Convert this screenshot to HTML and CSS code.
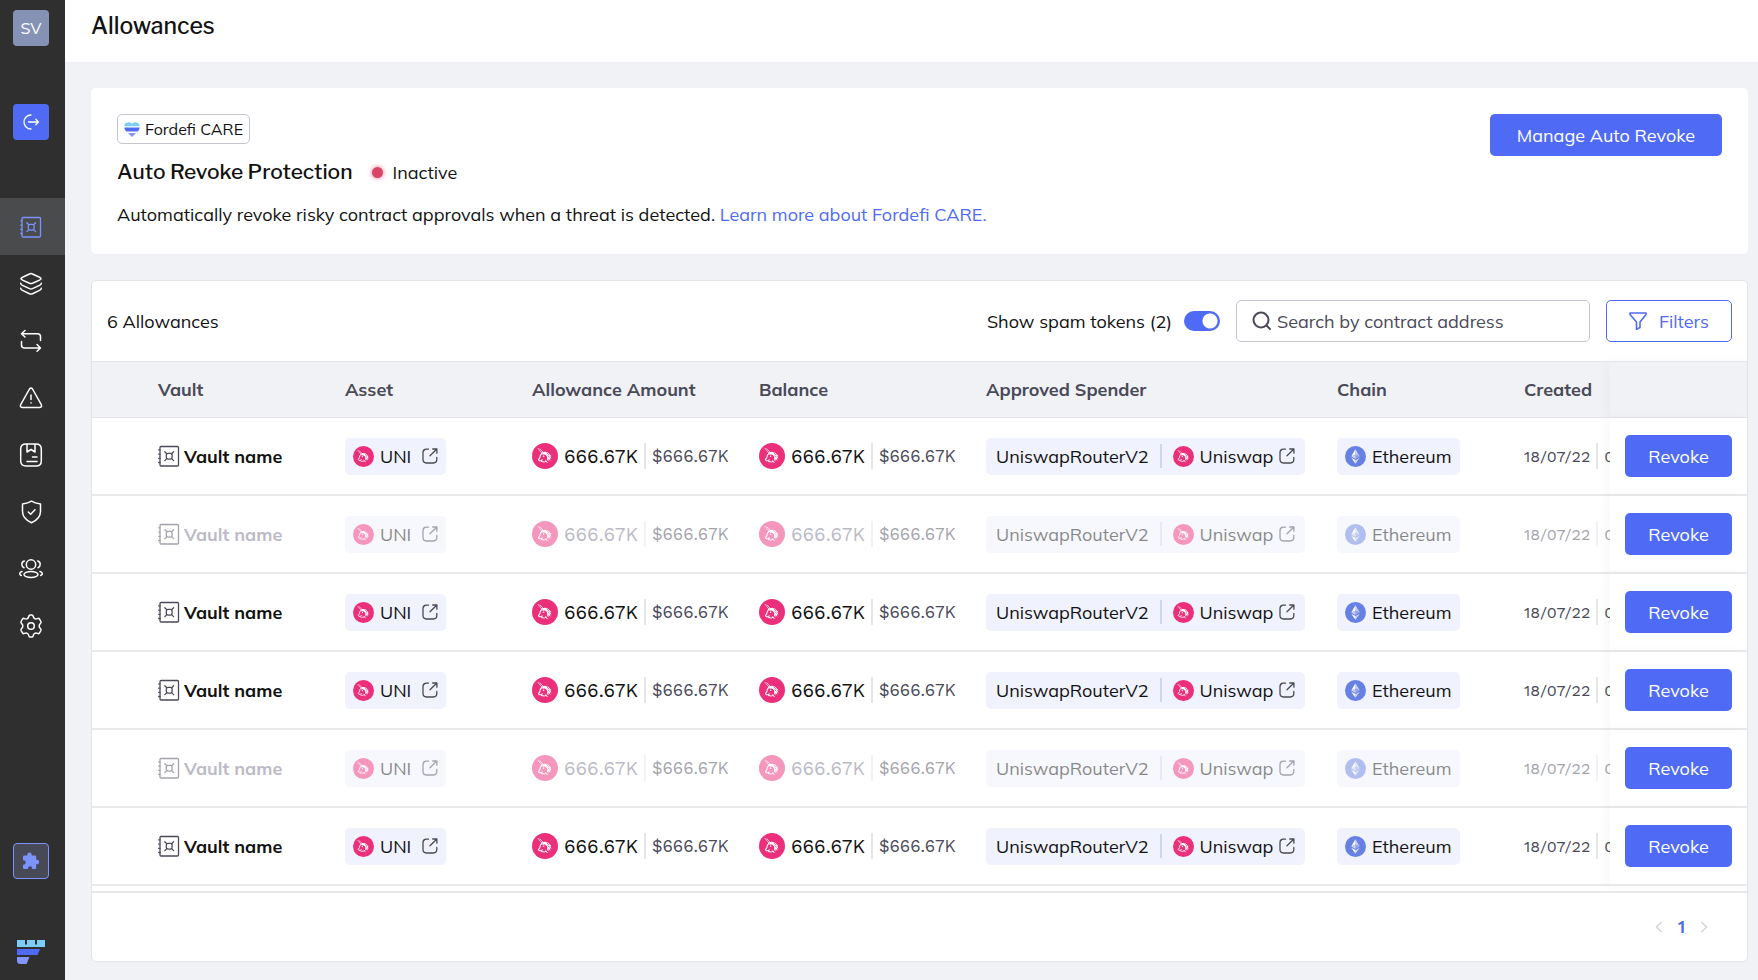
FILE: index.html
```html
<!DOCTYPE html>
<html lang="en">
<head>
<meta charset="utf-8">
<title>Allowances</title>
<link rel="stylesheet" href="styles.css">
</head>
<body>
<svg class="sprite" aria-hidden="true">
  <symbol id="i-vault" viewBox="0 0 22 22">
    <g fill="none" stroke="currentColor" stroke-width="1.3" stroke-linejoin="round" stroke-linecap="round">
      <rect x="2" y="1.500" width="18.500" height="19.500" rx="1"/>
      <path d="M.7 4.800H2M.7 9.100H2M.7 13.300H2M.7 17.500H2"/>
    </g>
    <g fill="none" stroke="currentColor" stroke-width="1.3" stroke-linecap="round">
      <rect x="8.300" y="8.300" width="5.800" height="5.800" rx="1.800"/>
      <path d="M6.800 6.800l2 2M15.600 6.800l-2 2M6.800 15.600l2-2M15.600 15.600l-2-2"/>
    </g>
  </symbol>
  <symbol id="i-link" viewBox="0 0 16 16">
    <path d="M6.500 1.200H4.400A3.400 3.400 0 0 0 1 4.600V11.600A3.400 3.400 0 0 0 4.400 15H11.400A3.400 3.400 0 0 0 14.800 11.600V9.500M8 7.700L14.600 1.200M10.700 1H14.900V5.200" fill="none" stroke="currentColor" stroke-width="1.300" stroke-linecap="round" stroke-linejoin="round"/>
  </symbol>
  <symbol id="i-uni" viewBox="0 0 26 26">
    <circle cx="13" cy="13" r="13" fill="#ec2f7b"/>
    <g fill="none" stroke="#fff" stroke-linecap="round" stroke-linejoin="round">
      <path d="M6 5.300L9.600 9.700M8 5.900L10.800 8.900" stroke-width=".7"/>
      <path d="M9.800 10.300L8.300 12.300 7.900 14.500 6.500 16.600 7.300 17.800 9 17.600 10.300 16.900" stroke-width="1.100"/>
      <path d="M9.500 18.600L12.300 19 14 18.200M13.800 17.800L15.200 19.700" stroke-width="1"/>
    </g>
    <path d="M10 9.200C13 8 16.300 8.700 17.600 11.300L19.600 13.300 18.300 13.100 19.500 16 17.900 14.800 18.400 18 16.700 15.800 16.300 18.600 15 16.200C16 14.300 14.700 12.300 12.700 11.500L10.500 11.700Z" fill="#fff"/>
    <path d="M14.600 9.700L17.300 12.300M15.600 12.500L17.600 14.300" stroke="#ec2f7b" stroke-width=".7"/>
    <circle cx="11.600" cy="13.200" r=".8" fill="#fff"/>
  </symbol>
  <symbol id="i-eth" viewBox="0 0 22 22">
    <circle cx="11" cy="11" r="11" fill="#6680e3"/>
    <path d="M11 3.500V8.900L15.500 11Z" fill="#c5d0f7"/>
    <path d="M11 3.500L6.500 11 11 8.900Z" fill="#fff"/>
    <path d="M11 8.900V13.700L15.500 11Z" fill="#91a4ec"/>
    <path d="M11 8.900V13.700L6.500 11Z" fill="#c5d0f7"/>
    <path d="M11 14.700V18.500L15.500 12.200Z" fill="#c5d0f7"/>
    <path d="M11 14.700V18.500L6.500 12.200Z" fill="#fff"/>
  </symbol>
</svg>

<div class="app">
  <nav class="sidebar" aria-label="Main">
    <button class="avatar" type="button">SV</button>
    <button class="tile tile-primary" type="button" aria-label="Connect">
      <svg width="18" height="18" viewBox="0 0 18 18" fill="none" stroke="#fff" stroke-width="1.300" stroke-linecap="round" stroke-linejoin="round"><path d="M9 2A7 7 0 1 0 9 16M6.500 9H16.500M13.800 6.300L16.500 9 13.800 11.700"/></svg>
    </button>
    <ul class="nav-list">
      <li><a class="nav-item active" href="#" aria-label="Vaults"><svg width="22" height="22"><use href="#i-vault"/></svg></a></li>
      <li><a class="nav-item" href="#" aria-label="Assets"><svg width="24" height="24" viewBox="0 0 24 24"><path d="M20.500 5.300C22.500 6.200 22.500 7.200 20.500 8.100L13.500 11.300Q12 11.900 10.500 11.300L3.500 8.100C1.500 7.200 1.500 6.200 3.500 5.300L10.500 2Q12 1.200 13.500 2ZM1.700 11.300Q2 12.700 3.500 13.400L10.500 16.600Q12 17.200 13.500 16.600L20.500 13.400Q22 12.700 22.300 11.300M1.700 16.300Q2 17.700 3.500 18.400L10.500 21.700Q12 22.300 13.500 21.700L20.500 18.400Q22 17.700 22.300 16.300"/></svg></a></li>
      <li><a class="nav-item" href="#" aria-label="Transactions"><svg width="24" height="24" viewBox="0 0 24 24"><path d="M6 1.500L2.500 4.800 6 8M2.500 4.800H18.500Q21.500 4.800 21.500 7.800V11.500M18 15.500L21.500 19 18 22.300M21.500 19H5.500Q2.500 19 2.500 16V12.500"/></svg></a></li>
      <li><a class="nav-item" href="#" aria-label="Alerts"><svg width="24" height="24" viewBox="0 0 24 24"><path d="M10.500 3Q12 .8 13.500 3L22.300 18.700Q23.300 21.300 20.800 21.500H3.200Q.7 21.300 1.700 18.700ZM12 9V13.500M12 16.800V17"/></svg></a></li>
      <li><a class="nav-item" href="#" aria-label="Address book"><svg width="24" height="24" viewBox="0 0 24 24"><path d="M7 1H17Q22.300 1 22.300 6V18Q22.300 23 17 23H7Q1.700 23 1.700 18V6Q1.700 1 7 1ZM8 1V9L12 6.500 16 9V1M13.500 14H18M8 18.500H18"/></svg></a></li>
      <li><a class="nav-item" href="#" aria-label="Policies"><svg width="24" height="24" viewBox="0 0 24 24"><path d="M12.500 1.200C9.500 3 7 3.500 3.500 4V11.500C3.500 17 7.500 20.500 12.500 22.800 17.500 20.500 21.500 17 21.500 11.500V4C18 3.500 15.500 3 12.500 1.200ZM9.300 12L11.700 14.200 16 9.800"/></svg></a></li>
      <li><a class="nav-item" href="#" aria-label="Users"><svg width="24" height="24" viewBox="0 0 24 24"><circle cx="12" cy="7.500" r="4.700"/><ellipse cx="12" cy="17.500" rx="7" ry="3"/><path d="M5.300 4Q2.800 4.800 2.800 7.300T5 10.700M18.700 4Q21.200 4.800 21.200 7.300T19 10.700M3 14.500C.2 15.200 0 17.500 2.300 18.500M21 14.500C23.800 15.200 24 17.500 21.700 18.500"/></svg></a></li>
      <li><a class="nav-item" href="#" aria-label="Settings"><svg width="24" height="24" viewBox="0 0 24 24"><circle cx="12" cy="12" r="3.300"/><path d="M9.900 2Q10.200 1 11.200 1H12.800Q13.800 1 14.100 2C14.600 4.600 16.300 5.400 18.500 4.600Q19.700 4 20.400 4.900L21.900 7.500Q22.400 8.500 21.600 9.200C19.700 11 19.700 13 21.600 14.800Q22.400 15.500 21.900 16.500L20.400 19.100Q19.700 20 18.500 19.400C16.300 18.600 14.600 19.400 14.100 22Q13.800 23 12.800 23H11.200Q10.200 23 9.900 22C9.400 19.400 7.700 18.600 5.500 19.400Q4.300 20 3.600 19.100L2.100 16.500Q1.600 15.500 2.400 14.800C4.300 13 4.300 11 2.400 9.200Q1.600 8.500 2.100 7.500L3.600 4.900Q4.300 4 5.500 4.600C7.700 5.400 9.400 4.600 9.900 2Z"/></svg></a></li>
    </ul>
    <button class="tile tile-outline" type="button" aria-label="Extensions">
      <svg width="18" height="18" viewBox="0 0 18 18" fill="#7b93fb"><path d="M2.200 3.500H5.300V2.800A2.200 2.200 0 0 1 9.700 2.800V3.500H13Q14.200 3.500 14.200 4.700V7.800H15A2.200 2.200 0 0 1 15 12.200H14.200V15.800Q14.200 17 13 17H10.200V16.300A2.100 2.100 0 0 0 6 16.300V17H2.200Q1 17 1 15.800V12.700H1.500A2.200 2.200 0 0 0 1.500 8.300H1V4.700Q1 3.500 2.200 3.500Z"/></svg>
    </button>
    <a class="logo" href="#" aria-label="Fordefi">
      <svg width="28" height="24" viewBox="0 0 28 24"><path d="M0 0H8V4.500H10V0H18V4.500H20V0H28V7H0Z" fill="#7ccdf5"/><path d="M0 9H23L20.500 15H0Z" fill="#4f6bf6"/><path d="M0 17H12.500L9.500 24H3.500Q0 24 0 20.500Z" fill="#8296fb"/></svg>
    </a>
  </nav>

  <div class="page">
    <header class="topbar"><h1>Allowances</h1></header>
    <main class="content">
      <section class="care">
        <div class="care-info">
          <span class="badge">
            <svg width="16" height="15" viewBox="0 0 16 15"><path d="M.3 4.300C.3 0 5.500-1 8 1.800 10.500-1 15.700 0 15.700 4.300Z" fill="#7ccdf5"/><path d="M.3 5.500H15.700Q15.500 7.800 13.700 9.600H2.300Q.5 7.800 .3 5.500Z" fill="#4f6bf6"/><path d="M3.800 11H12.200L8 15Z" fill="#8296fb"/></svg>
            Fordefi CARE
          </span>
          <div class="care-title">
            <h2>Auto Revoke Protection</h2>
            <span class="status">Inactive</span>
          </div>
          <p>Automatically revoke risky contract approvals when a threat is detected. <a href="#">Learn more about Fordefi CARE.</a></p>
        </div>
        <button class="btn btn-wide" type="button">Manage Auto Revoke</button>
      </section>

      <section class="panel">
        <div class="toolbar">
          <h3>6 Allowances</h3>
          <label class="spam">Show spam tokens (2) <input type="checkbox" role="switch" checked></label>
          <label class="search">
            <svg width="20" height="20" viewBox="0 0 20 20" fill="none" stroke="#4a4a59" stroke-width="2" stroke-linecap="round"><circle cx="9" cy="9" r="7.500"/><path d="M14.500 14.500L18 18"/></svg>
            <input type="search" placeholder="Search by contract address" aria-label="Search by contract address">
          </label>
          <button class="btn btn-outline" type="button">
            <svg width="18" height="18" viewBox="0 0 18 18" fill="none" stroke="currentColor" stroke-width="1.600" stroke-linejoin="round"><path d="M1 1H17V2.500L11 10V15.500L7.500 17.300V10L1 2.500Z"/></svg>
            Filters
          </button>
        </div>

        <table class="grid">
          <colgroup><col class="c-pad"><col class="c-std"><col class="c-std"><col class="c-num"><col class="c-num"><col class="c-spender"><col class="c-std"><col><col class="c-act"></colgroup>
          <thead><tr><th></th><th>Vault</th><th>Asset</th><th>Allowance Amount</th><th>Balance</th><th>Approved Spender</th><th>Chain</th><th>Created</th><th class="act"></th></tr></thead>
          <tbody id="rows"></tbody>
        </table>

        <footer class="pager">
          <button type="button" aria-label="Previous page" disabled><svg width="8" height="12" viewBox="0 0 8 12"><path d="M6.500 1L1.500 6 6.500 11"/></svg></button>
          <button class="current" type="button">1</button>
          <button type="button" aria-label="Next page" disabled><svg width="8" height="12" viewBox="0 0 8 12"><path d="M1.500 1L6.500 6 1.500 11"/></svg></button>
        </footer>
      </section>
    </main>
  </div>
</div>
<script src="rows.js"></script>
</body>
</html>
```
FILE: styles.css
```css
* { box-sizing: border-box; }

body {
  margin: 0;
  background: #f1f2f6;
  color: #121212;
  font-family: Mulish, Lato, sans-serif;
  font-size: 18px;
}

h1, h2, h3, p, ul { margin: 0; padding: 0; }
button, input { font: inherit; }
button { padding: 0; border: 0; cursor: pointer; }
a { color: #4f6bf6; text-decoration: none; }
.sprite { display: none; }

.app { display: flex; min-height: 100vh; }

.sidebar {
  display: flex;
  flex-direction: column;
  align-items: center;
  flex: none;
  width: 65px;
  padding: 10px 0 16px;
  background: #2f2f2f;
}
.avatar, .tile {
  display: grid;
  place-items: center;
  width: 36px;
  height: 36px;
  margin-right: 3px;
  border-radius: 4px;
}
.avatar { background: #8592b6; color: #fff; font-size: 16px; }
.tile-primary { margin-top: 58px; background: #4f6bf6; }
.tile-outline { margin-top: auto; border: 1px solid #7b93fb; background: #484957; }
.nav-list { width: 100%; margin-top: 58px; list-style: none; }
.nav-item {
  display: grid;
  place-items: center;
  height: 57px;
  padding-right: 3px;
  color: #fff;
}
.nav-item svg {
  fill: none;
  stroke: currentColor;
  stroke-width: 1.5;
  stroke-linecap: round;
  stroke-linejoin: round;
}
.nav-item.active { background: #4a4b4d; color: #7b93fb; }
.logo { margin-top: 61px; margin-right: 3px; line-height: 0; }

.page { flex: 1; min-width: 0; }
.topbar { height: 62px; padding: 10px 26px; background: #fff; }
h1 {
  font-family: "Libre Franklin", "Liberation Sans", sans-serif;
  font-size: 23px;
  font-weight: 500;
  line-height: 32px;
}
.content { padding: 26px 10px 18px 26px; }

.care {
  display: flex;
  justify-content: space-between;
  align-items: flex-start;
  padding: 26px 26px 27px;
  border-radius: 5px;
  background: #fff;
}
.badge {
  display: inline-flex;
  align-items: center;
  gap: 5px;
  height: 30px;
  padding: 0 6px;
  border: 1px solid #c5c5d0;
  border-radius: 5px;
  font-size: 16px;
}
.care-title { display: flex; align-items: center; gap: 19px; margin: 12px 0 15px; }
h2 {
  font-family: "Libre Franklin", "Liberation Sans", sans-serif;
  font-size: 21px;
  font-weight: 500;
  line-height: 32px;
}
.status { display: flex; align-items: center; gap: 10px; }
.status::before {
  content: "";
  width: 11px;
  height: 11px;
  border-radius: 50%;
  background: #d94467;
  box-shadow: 0 0 4px 1px #f0a6b8;
}
.care p { line-height: 24px; }

.btn {
  display: inline-flex;
  align-items: center;
  justify-content: center;
  gap: 12px;
  height: 42px;
  padding: 0 22px;
  border-radius: 5px;
  background: #4f6bf6;
  color: #fff;
  white-space: nowrap;
}
.btn-wide { padding: 0 27px; }
.btn-outline { border: 1px solid #4f6bf6; background: #fff; color: #4f6bf6; }

.panel {
  margin-top: 26px;
  overflow: hidden;
  border: 1px solid #e3e4e8;
  border-radius: 5px;
  background: #fff;
}
.toolbar { display: flex; align-items: center; gap: 16px; height: 80px; padding: 0 15px; }
h3 { flex: 1; font-size: 18px; font-weight: 400; }
.spam { display: flex; align-items: center; gap: 12px; }
.spam input {
  appearance: none;
  width: 36px;
  height: 20px;
  margin: 0;
  border-radius: 10px;
  background: radial-gradient(circle at 26px 10px, #fff 7px, #4f6bf6 8px);
}
.search {
  display: flex;
  align-items: center;
  gap: 5px;
  width: 354px;
  height: 42px;
  padding: 0 15px;
  border: 1px solid #c5c5d0;
  border-radius: 5px;
}
.search input { flex: 1; min-width: 0; padding: 0; border: 0; outline: 0; background: none; }
.search input::placeholder { color: #4a4a59; opacity: 1; }
.search svg { flex: none; }

.grid { width: 100%; table-layout: fixed; border-collapse: separate; border-spacing: 0; }
.c-pad { width: 66px; }
.c-std { width: 187px; }
.c-num { width: 227px; }
.c-spender { width: 351px; }
.c-act { width: 137px; }
th, td { padding: 0; text-align: left; white-space: nowrap; }
th {
  height: 57px;
  border: solid #e4e5e9;
  border-width: 1px 0;
  background: #f1f2f6;
  color: #4a4a59;
  font-weight: 700;
}
td { height: 78px; border-bottom: 2px solid #e9e9ec; }
.act {
  position: sticky;
  right: 0;
  padding-left: 15px;
  box-shadow: -4px 0 12px rgba(0, 0, 0, 0.03);
}
td.act { background: #fff; }
.act .btn { width: 107px; }

.cell { display: flex; align-items: center; }
.vault { gap: 4px; font-weight: 700; }
.vault svg { color: #4a4a59; }
.chip {
  display: inline-flex;
  align-items: center;
  gap: 6px;
  height: 37px;
  padding: 0 8px;
  border-radius: 5px;
  background: #f0f2fe;
  color: inherit;
}
.chip .ext { color: #4a4a59; }
.asset .ext { margin-left: 5px; }
.spender { padding: 0 10px; }
.divider { flex: none; width: 2px; height: 26px; background: #e6e6ea; }
.spender .divider { height: 24px; margin: 0 5px; background: #cdd7ef; }
.amount { gap: 6px; font-family: "Work Sans", Inter, sans-serif; font-size: 19px; }
.amount small, .date { color: #4a4a59; font-family: "Work Sans", Inter, sans-serif; }
.amount small { font-size: 17px; }
.date { gap: 6px; overflow: hidden; font-size: 16px; }
.muted td:not(.act) > * { opacity: 0.5; }
.muted .vault, .muted .amount { color: #7a7a90; }

.pager {
  display: flex;
  align-items: center;
  justify-content: flex-end;
  gap: 15px;
  height: 70px;
  margin-top: 5px;
  padding: 0 39px;
  border-top: 2px solid #e9e9ec;
}
.pager button { background: none; line-height: 20px; }
.pager svg { fill: none; stroke: #d5d5d9; stroke-width: 1.5; }
.pager .current { color: #4f6bf6; font-family: "Work Sans", Inter, sans-serif; font-size: 17px; font-weight: 600; }
```
FILE: rows.js
```js
const icon = (id, size, cls = "") =>
  `<svg class="${cls}" width="${size}" height="${size}"><use href="#${id}"/></svg>`;

const amount = `<div class="cell amount">${icon("i-uni", 26)}<span>666.67K</span><i class="divider"></i><small>$666.67K</small></div>`;

const row = (muted) => `<tr class="${muted ? "muted" : ""}">
  <td></td>
  <td><div class="cell vault">${icon("i-vault", 22)}Vault name</div></td>
  <td><a class="chip asset" href="#">${icon("i-uni", 21)}UNI${icon("i-link", 16, "ext")}</a></td>
  <td>${amount}</td>
  <td>${amount}</td>
  <td><a class="chip spender" href="#">UniswapRouterV2<i class="divider"></i>${icon("i-uni", 21)}Uniswap${icon("i-link", 16, "ext")}</a></td>
  <td><span class="chip">${icon("i-eth", 21)}Ethereum</span></td>
  <td><div class="cell date">18/07/22<i class="divider"></i><span>09:41</span></div></td>
  <td class="act"><button class="btn" type="button">Revoke</button></td>
</tr>`;

document.getElementById("rows").innerHTML =
  [false, true, false, false, true, false].map(row).join("");
```
